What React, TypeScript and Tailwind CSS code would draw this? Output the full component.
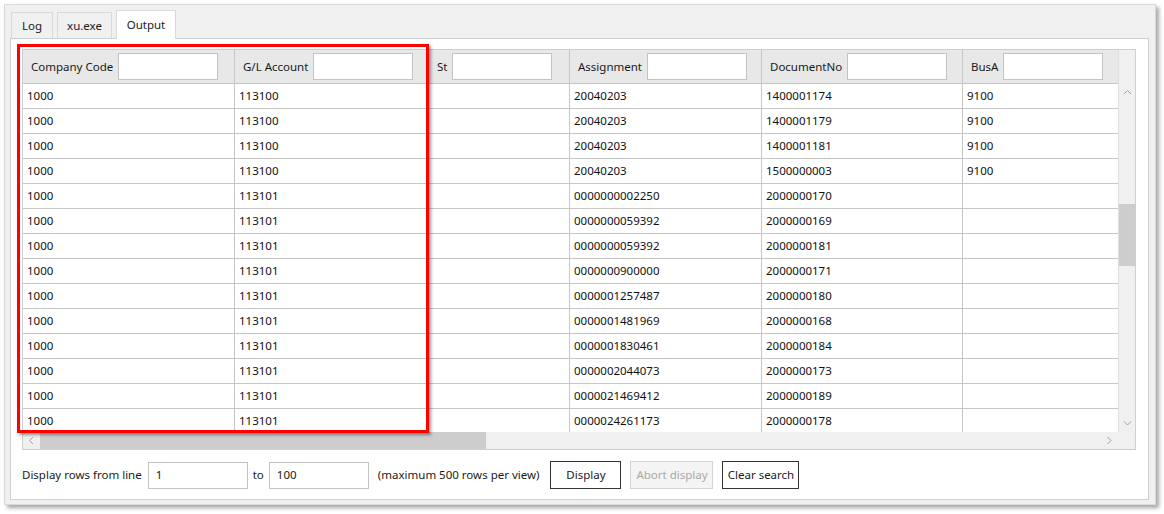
import React from "react";

const font = "font-['Noto_Sans','Open_Sans',sans-serif]";

const columns = [
  { label: "Company Code", width: 212 },
  { label: "G/L Account", width: 194 },
  { label: "St", width: 141 },
  { label: "Assignment", width: 192 },
  { label: "DocumentNo", width: 201 },
  { label: "BusA", width: 157 },
];

const rows: string[][] = [
  ["1000", "113100", "", "20040203", "1400001174", "9100"],
  ["1000", "113100", "", "20040203", "1400001179", "9100"],
  ["1000", "113100", "", "20040203", "1400001181", "9100"],
  ["1000", "113100", "", "20040203", "1500000003", "9100"],
  ["1000", "113101", "", "0000000002250", "2000000170", ""],
  ["1000", "113101", "", "0000000059392", "2000000169", ""],
  ["1000", "113101", "", "0000000059392", "2000000181", ""],
  ["1000", "113101", "", "0000000900000", "2000000171", ""],
  ["1000", "113101", "", "0000001257487", "2000000180", ""],
  ["1000", "113101", "", "0000001481969", "2000000168", ""],
  ["1000", "113101", "", "0000001830461", "2000000184", ""],
  ["1000", "113101", "", "0000002044073", "2000000173", ""],
  ["1000", "113101", "", "0000021469412", "2000000189", ""],
  ["1000", "113101", "", "0000024261173", "2000000178", ""],
];

function Chevron({ dir }: { dir: "up" | "down" | "left" | "right" }) {
  const d = {
    up: "M1 5 L4.5 1.5 L8 5",
    down: "M1 1.5 L4.5 5 L8 1.5",
    left: "M5 1 L1.5 4.5 L5 8",
    right: "M1.5 1 L5 4.5 L1.5 8",
  }[dir];
  const vertical = dir === "up" || dir === "down";
  return (
    <svg width={vertical ? 9 : 7} height={vertical ? 7 : 9} viewBox={vertical ? "0 0 9 7" : "0 0 7 9"}>
      <path d={d} fill="none" stroke="#a0a0a0" strokeWidth="1" />
    </svg>
  );
}

function Tab({ label, width, active }: { label: string; width: number; active?: boolean }) {
  if (active) {
    return (
      <div
        className="h-[29px] -mb-px flex items-center justify-center bg-white border border-b-0 border-[#d9d9d9] relative z-10 text-[#1a1a1a]"
        style={{ width }}
      >
        {label}
      </div>
    );
  }
  return (
    <div
      className="h-[26px] flex items-center justify-center bg-[#f0f0f0] border border-b-0 border-[#d9d9d9] text-[#1a1a1a]"
      style={{ width }}
    >
      {label}
    </div>
  );
}

function TextBox({ value, width }: { value?: string; width: number }) {
  return (
    <div
      className="h-[27px] bg-white border border-[#c3c3c3] flex items-center pl-[7px] text-[#1a1a1a] shrink-0"
      style={{ width }}
    >
      {value}
    </div>
  );
}

export default function App() {
  return (
    <div className={`${font} text-[11.5px] w-[1164px] h-[514px] bg-white pt-[4px] pl-[4px]`}>
      <div className="w-[1152px] h-[501px] bg-[#f0f0f0] border border-[#dadada] shadow-[3px_3px_4px_rgba(0,0,0,0.35)] pl-[5px] pt-[5px]">
        {/* tabs */}
        <div className="flex items-end gap-[4px] pl-[1px] h-[28px]">
          <Tab label="Log" width={42} />
          <Tab label="xu.exe" width={55} />
          <Tab label="Output" width={60} active />
        </div>

        {/* panel */}
        <div className="relative w-[1139px] h-[462px] bg-white border border-[#cfcfcf] pt-[10px] pl-[11px]">
          {/* grid */}
          <div className="w-[1114px] h-[401px] border border-[#cfcfcf] flex flex-col">
            <div className="flex h-[382px]">
              <div className="w-[1096px] overflow-hidden flex flex-col">
                {/* header */}
                <div className="flex h-[34px] shrink-0 bg-[#e8e8e8] border-b border-[#c6c6c6]">
                  {columns.map((c, i) => (
                    <div
                      key={c.label}
                      className={`shrink-0 flex items-center pl-[8px] gap-[5px] text-[#1a1a1a] ${i < columns.length - 1 ? "border-r border-[#c6c6c6]" : ""}`}
                      style={{ width: c.width }}
                    >
                      <span className="whitespace-nowrap">{c.label}</span>
                      <TextBox width={100} />
                    </div>
                  ))}
                </div>
                {/* rows */}
                {rows.map((r, ri) => (
                  <div key={ri} className="flex h-[25px] shrink-0 border-b border-[#c6c6c6]">
                    {r.map((cell, ci) => (
                      <div
                        key={ci}
                        className={`shrink-0 flex items-center pl-[4px] text-[#111] ${ci < r.length - 1 ? "border-r border-[#c6c6c6]" : ""}`}
                        style={{ width: columns[ci].width }}
                      >
                        {cell}
                      </div>
                    ))}
                  </div>
                ))}
              </div>
              {/* vertical scrollbar */}
              <div className="w-[17px] bg-[#f0f0f0] border-l border-[#e0e0e0] flex flex-col items-center">
                <div className="h-[34px] w-full" />
                <div className="h-[17px] flex items-center justify-center">
                  <Chevron dir="up" />
                </div>
                <div className="h-[103px]" />
                <div className="h-[62px] w-full bg-[#cdcdcd]" />
                <div className="flex-1" />
                <div className="h-[17px] flex items-center justify-center">
                  <Chevron dir="down" />
                </div>
              </div>
            </div>
            {/* horizontal scrollbar */}
            <div className="flex h-[17px] bg-[#f0f0f0]">
              <div className="w-[17px] flex items-center justify-center">
                <Chevron dir="left" />
              </div>
              <div className="w-[446px] bg-[#cdcdcd]" />
              <div className="flex-1" />
              <div className="w-[17px] flex items-center justify-center">
                <Chevron dir="right" />
              </div>
              <div className="w-[17px]" />
            </div>
          </div>

          {/* bottom controls */}
          <div className="flex items-center mt-[11px] h-[28px] text-[#1a1a1a]">
            <span>Display rows from line</span>
            <div className="ml-[6px]">
              <TextBox value="1" width={100} />
            </div>
            <span className="ml-[5px]">to</span>
            <div className="ml-[5px]">
              <TextBox value="100" width={100} />
            </div>
            <span className="ml-[9px]">(maximum 500 rows per view)</span>
            <button className="ml-[11px] h-[28px] w-[71px] border border-[#333] bg-white">Display</button>
            <button className="ml-[9px] h-[28px] w-[83px] border border-[#d4d4d4] bg-[#f4f4f4] text-[#a8a8a8]">
              Abort display
            </button>
            <button className="ml-[9px] h-[28px] w-[77px] border border-[#333] bg-white">Clear search</button>
          </div>

          {/* highlight overlay */}
          <div className="absolute left-[6px] top-[5px] w-[412px] h-[389px] border-[3px] border-[#ff0000] shadow-[2px_2px_3px_rgba(0,0,0,0.4)] pointer-events-none" />
        </div>
      </div>
    </div>
  );
}
